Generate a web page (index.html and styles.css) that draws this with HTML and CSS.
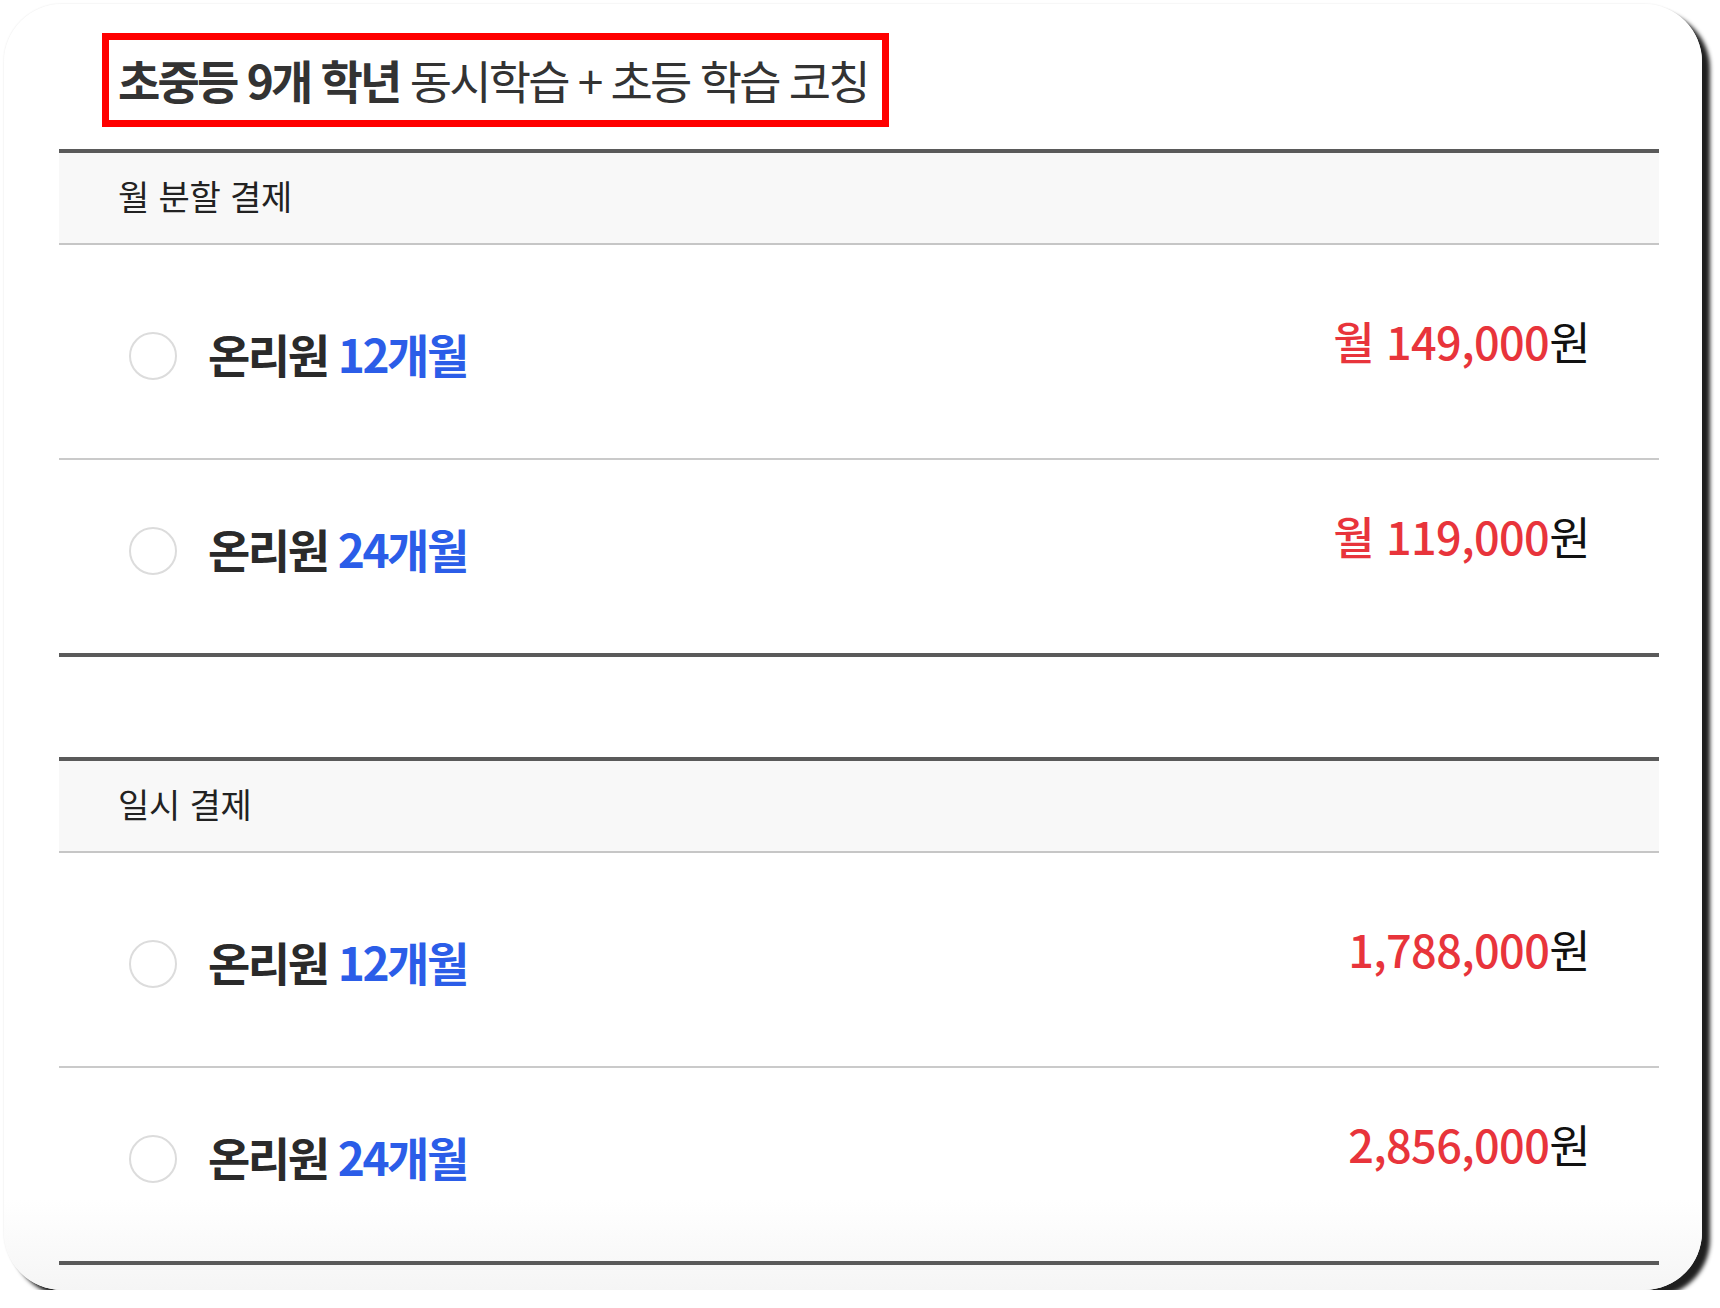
FILE: index.html
```html
<!DOCTYPE html>
<html lang="ko">
<head>
<meta charset="utf-8">
<link rel="stylesheet" href="styles.css">
</head>
<body>
<div class="card">
  <div class="title"><strong>초중등 9개 학년</strong> 동시학습 + 초등 학습 코칭</div>

  <section class="group">
    <div class="group-head">월 분할 결제</div>
    <div class="row first">
      <span class="radio"></span>
      <span class="label">온리원 <em>12개월</em></span>
      <span class="price"><b>월 149,000</b>원</span>
    </div>
    <div class="row">
      <span class="radio"></span>
      <span class="label">온리원 <em>24개월</em></span>
      <span class="price"><b>월 119,000</b>원</span>
    </div>
  </section>

  <section class="group">
    <div class="group-head">일시 결제</div>
    <div class="row first">
      <span class="radio"></span>
      <span class="label">온리원 <em>12개월</em></span>
      <span class="price"><b>1,788,000</b>원</span>
    </div>
    <div class="row">
      <span class="radio"></span>
      <span class="label">온리원 <em>24개월</em></span>
      <span class="price"><b>2,856,000</b>원</span>
    </div>
  </section>
</div>
</body>
</html>
```

FILE: styles.css
```css
html, body {
  margin: 0;
  padding: 0;
  background: #ffffff;
}

body {
  font-family: "Noto Sans CJK KR", "Noto Sans", sans-serif;
  color: #222;
  padding: 4px 0 0 4px;
}

.card {
  box-sizing: border-box;
  width: 1698px;
  height: 1286px;
  border-radius: 58px;
  background: linear-gradient(to bottom, #ffffff calc(100% - 90px), #f5f5f5 100%);
  box-shadow: 8px 7px 4px rgba(0, 0, 0, 0.88), 0 0 2px rgba(0, 0, 0, 0.12);
  padding: 29px 0 0 55px;
}

.title {
  box-sizing: border-box;
  width: 787px;
  height: 94px;
  margin-left: 43px;
  border: 7px solid #ff0000;
  padding-left: 9px;
  padding-bottom: 2px;
  display: flex;
  align-items: center;
  font-size: 46px;
  letter-spacing: -2.8px;
  color: #333;
  white-space: nowrap;
}

.title strong {
  font-weight: 700;
  margin-right: 10px;
}

.group {
  width: 1600px;
  margin-top: 22px;
  border-top: 4px solid #5a5a5a;
  border-bottom: 4px solid #5a5a5a;
}

.group + .group {
  margin-top: 100px;
}

.group-head {
  box-sizing: border-box;
  height: 92px;
  background: #f8f8f8;
  border-bottom: 2px solid #c6c6c6;
  display: flex;
  align-items: center;
  padding: 0 0 6px 59px;
  font-size: 34px;
  letter-spacing: -0.2px;
  color: #222;
}

.row {
  box-sizing: border-box;
  height: 193px;
  padding: 0 69px 12px 70px;
  display: flex;
  align-items: center;
}

.row.first {
  height: 213px;
  padding-top: 20px;
}

.row + .row {
  border-top: 2px solid #cacaca;
  height: 195px;
}

.radio {
  box-sizing: border-box;
  width: 48px;
  height: 48px;
  border: 2px solid #dcdcdc;
  border-radius: 50%;
  flex: none;
}

.label {
  margin-left: 31px;
  margin-bottom: 6px;
  font-size: 46px;
  font-weight: 700;
  letter-spacing: -2.5px;
  color: #2a2a2a;
  white-space: nowrap;
}

.label em {
  font-style: normal;
  color: #2b5de8;
  font-weight: 700;
}

.price {
  margin-left: auto;
  margin-bottom: 30px;
  font-size: 45px;
  letter-spacing: -0.6px;
  color: #111;
  white-space: nowrap;
}

.price b {
  font-weight: 500;
  color: #e8343b;
}
```
